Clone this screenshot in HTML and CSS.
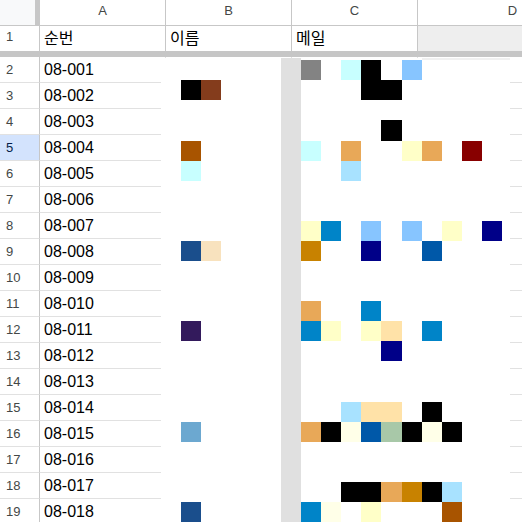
FILE: index.html
```html
<!DOCTYPE html>
<html lang="ko">
<head>
<meta charset="utf-8">
<title>Sheet</title>
<link rel="stylesheet" href="styles.css">
</head>
<body>
<div class="sheet">
  <div class="row hdr">
    <div class="cell corner"></div>
    <div class="cell col colA">A</div>
    <div class="cell col colB">B</div>
    <div class="cell col colC">C</div>
    <div class="cell col colD">D</div>
  </div>
  <div class="row r1">
    <div class="cell num first">1</div>
    <div class="cell colA">순번</div>
    <div class="cell colB">이름</div>
    <div class="cell colC">메일</div>
    <div class="cell colD shade"></div>
  </div>
  <div class="freeze"></div>
  <div class="row"><div class="cell num">2</div><div class="cell colA">08-001</div><div class="cell colB"></div><div class="cell colC"></div><div class="cell colD"></div></div>
  <div class="row"><div class="cell num">3</div><div class="cell colA">08-002</div><div class="cell colB"></div><div class="cell colC"></div><div class="cell colD"></div></div>
  <div class="row"><div class="cell num">4</div><div class="cell colA">08-003</div><div class="cell colB"></div><div class="cell colC"></div><div class="cell colD"></div></div>
  <div class="row"><div class="cell num sel">5</div><div class="cell colA">08-004</div><div class="cell colB"></div><div class="cell colC"></div><div class="cell colD"></div></div>
  <div class="row"><div class="cell num">6</div><div class="cell colA">08-005</div><div class="cell colB"></div><div class="cell colC"></div><div class="cell colD"></div></div>
  <div class="row"><div class="cell num">7</div><div class="cell colA">08-006</div><div class="cell colB"></div><div class="cell colC"></div><div class="cell colD"></div></div>
  <div class="row"><div class="cell num">8</div><div class="cell colA">08-007</div><div class="cell colB"></div><div class="cell colC"></div><div class="cell colD"></div></div>
  <div class="row"><div class="cell num">9</div><div class="cell colA">08-008</div><div class="cell colB"></div><div class="cell colC"></div><div class="cell colD"></div></div>
  <div class="row"><div class="cell num">10</div><div class="cell colA">08-009</div><div class="cell colB"></div><div class="cell colC"></div><div class="cell colD"></div></div>
  <div class="row"><div class="cell num">11</div><div class="cell colA">08-010</div><div class="cell colB"></div><div class="cell colC"></div><div class="cell colD"></div></div>
  <div class="row"><div class="cell num">12</div><div class="cell colA">08-011</div><div class="cell colB"></div><div class="cell colC"></div><div class="cell colD"></div></div>
  <div class="row"><div class="cell num">13</div><div class="cell colA">08-012</div><div class="cell colB"></div><div class="cell colC"></div><div class="cell colD"></div></div>
  <div class="row"><div class="cell num">14</div><div class="cell colA">08-013</div><div class="cell colB"></div><div class="cell colC"></div><div class="cell colD"></div></div>
  <div class="row"><div class="cell num">15</div><div class="cell colA">08-014</div><div class="cell colB"></div><div class="cell colC"></div><div class="cell colD"></div></div>
  <div class="row"><div class="cell num">16</div><div class="cell colA">08-015</div><div class="cell colB"></div><div class="cell colC"></div><div class="cell colD"></div></div>
  <div class="row"><div class="cell num">17</div><div class="cell colA">08-016</div><div class="cell colB"></div><div class="cell colC"></div><div class="cell colD"></div></div>
  <div class="row"><div class="cell num">18</div><div class="cell colA">08-017</div><div class="cell colB"></div><div class="cell colC"></div><div class="cell colD"></div></div>
  <div class="row"><div class="cell num">19</div><div class="cell colA">08-018</div><div class="cell colB"></div><div class="cell colC"></div><div class="cell colD"></div></div>

  <div class="picture">
    <i class="strip"></i>
    <i class="faint"></i>
    <i class="px c-k" style="grid-area:3/2"></i>
    <i class="px c-br1" style="grid-area:3/3"></i>
    <i class="px c-br2" style="grid-area:6/2"></i>
    <i class="px c-cy" style="grid-area:7/2"></i>
    <i class="px c-nb" style="grid-area:11/2"></i>
    <i class="px c-wh" style="grid-area:11/3"></i>
    <i class="px c-pu" style="grid-area:15/2"></i>
    <i class="px c-sb" style="grid-area:20/2"></i>
    <i class="px c-nb" style="grid-area:24/2"></i>

    <i class="px c-gr" style="grid-area:2/8"></i>
    <i class="px c-cy" style="grid-area:2/10"></i>
    <i class="px c-k" style="grid-area:2/11"></i>
    <i class="px c-lb1" style="grid-area:2/13"></i>

    <i class="px c-k" style="grid-area:3/11"></i>
    <i class="px c-k" style="grid-area:3/12"></i>

    <i class="px c-k" style="grid-area:5/12"></i>

    <i class="px c-cy" style="grid-area:6/8"></i>
    <i class="px c-sa" style="grid-area:6/10"></i>
    <i class="px c-ly" style="grid-area:6/13"></i>
    <i class="px c-sa" style="grid-area:6/14"></i>
    <i class="px c-dr" style="grid-area:6/16"></i>

    <i class="px c-lb2" style="grid-area:7/10"></i>

    <i class="px c-ly" style="grid-area:10/8"></i>
    <i class="px c-bl" style="grid-area:10/9"></i>
    <i class="px c-lb1" style="grid-area:10/11"></i>
    <i class="px c-lb1" style="grid-area:10/13"></i>
    <i class="px c-ly" style="grid-area:10/15"></i>
    <i class="px c-nv" style="grid-area:10/17"></i>

    <i class="px c-go" style="grid-area:11/8"></i>
    <i class="px c-nv" style="grid-area:11/11"></i>
    <i class="px c-db" style="grid-area:11/14"></i>

    <i class="px c-sa" style="grid-area:14/8"></i>
    <i class="px c-bl" style="grid-area:14/11"></i>

    <i class="px c-bl" style="grid-area:15/8"></i>
    <i class="px c-ly" style="grid-area:15/9"></i>
    <i class="px c-ly" style="grid-area:15/11"></i>
    <i class="px c-mo" style="grid-area:15/12"></i>
    <i class="px c-bl" style="grid-area:15/14"></i>

    <i class="px c-nv" style="grid-area:16/12"></i>

    <i class="px c-lb2" style="grid-area:19/10"></i>
    <i class="px c-mo" style="grid-area:19/11"></i>
    <i class="px c-mo" style="grid-area:19/12"></i>
    <i class="px c-k" style="grid-area:19/14"></i>

    <i class="px c-sa" style="grid-area:20/8"></i>
    <i class="px c-k" style="grid-area:20/9"></i>
    <i class="px c-iv" style="grid-area:20/10"></i>
    <i class="px c-db" style="grid-area:20/11"></i>
    <i class="px c-sg" style="grid-area:20/12"></i>
    <i class="px c-k" style="grid-area:20/13"></i>
    <i class="px c-iv" style="grid-area:20/14"></i>
    <i class="px c-k" style="grid-area:20/15"></i>

    <i class="px c-k" style="grid-area:23/10"></i>
    <i class="px c-k" style="grid-area:23/11"></i>
    <i class="px c-sa" style="grid-area:23/12"></i>
    <i class="px c-go" style="grid-area:23/13"></i>
    <i class="px c-k" style="grid-area:23/14"></i>
    <i class="px c-lb2" style="grid-area:23/15"></i>

    <i class="px c-bl" style="grid-area:24/8"></i>
    <i class="px c-iv" style="grid-area:24/9"></i>
    <i class="px c-ly" style="grid-area:24/11"></i>
    <i class="px c-br2" style="grid-area:24/15"></i>
  </div>
</div>
</body>
</html>
```

FILE: styles.css
```css
html, body {
  margin: 0;
  padding: 0;
  background: #ffffff;
}

body {
  width: 522px;
  height: 522px;
  overflow: hidden;
  font-family: "Liberation Sans", "Noto Sans CJK KR", Arial, sans-serif;
  color: #000000;
}

.sheet {
  position: relative;
  width: 522px;
  height: 522px;
  overflow: hidden;
}

.row {
  display: flex;
  flex-wrap: nowrap;
}

.cell {
  box-sizing: border-box;
  flex: 0 0 auto;
  height: 26px;
  border-right: 1px solid #e1e1e1;
  border-bottom: 1px solid #e1e1e1;
  font-size: 16px;
  line-height: 25px;
  padding-left: 4px;
  white-space: nowrap;
  overflow: hidden;
}

.colA, .colB, .colC {
  width: 126px;
}

.colD {
  width: 190px;
}

.num {
  width: 40px;
  padding-left: 6px;
  font-size: 13px;
  color: #444746;
  border-right-color: #c7c7c7;
}

.num.sel {
  background: #d3e3fd;
  color: #041e49;
}

/* column header row */
.hdr .cell {
  border-bottom-color: #c7c7c7;
  border-right-color: #c7c7c7;
}

.corner {
  width: 40px;
  background: #f8f9fa;
  border-right: 5px solid #c7c7c7 !important;
}

.col {
  padding-left: 0;
  text-align: center;
  font-size: 13px;
  line-height: 21px;
  color: #444746;
}

/* frozen first row */
.r1 .cell {
  height: 25px;
  border-bottom: none;
  border-right-color: #c7c7c7;
}

.r1 .num {
  line-height: 21px;
}

.shade {
  background: #eeeeee;
}

.freeze {
  height: 6px;
  background: #c6c6c6;
}

/* floating pixel picture over the cells */
.picture {
  position: absolute;
  left: 161px;
  top: 58px;
  width: 349px;
  height: 464px;
  background: #ffffff;
  display: grid;
  grid-template-columns: repeat(11, 20px) 21px repeat(5, 20px) 8px;
  grid-template-rows: 2px repeat(3, 20px) 21px repeat(12, 20px) 21px repeat(6, 20px);
}

.picture i {
  display: block;
}

.strip {
  grid-column: 7;
  grid-row: 1 / -1;
  background: #e0e0e0;
}

.faint {
  grid-column: 14 / 19;
  grid-row: 1;
  background: #f0f0f0;
}

.c-k   { background: #000000; }
.c-gr  { background: #838383; }
.c-br1 { background: #843c1c; }
.c-br2 { background: #a85400; }
.c-cy  { background: #c8ffff; }
.c-nb  { background: #1a4e8c; }
.c-wh  { background: #f8e2be; }
.c-pu  { background: #331a5c; }
.c-sb  { background: #6ca8d0; }
.c-lb1 { background: #87c5ff; }
.c-lb2 { background: #a8e2ff; }
.c-sa  { background: #e8a858; }
.c-ly  { background: #ffffc8; }
.c-iv  { background: #ffffe8; }
.c-dr  { background: #880000; }
.c-bl  { background: #0084c8; }
.c-nv  { background: #000088; }
.c-go  { background: #c88200; }
.c-db  { background: #0058a8; }
.c-mo  { background: #ffe2a8; }
.c-sg  { background: #a8c8a8; }
```
